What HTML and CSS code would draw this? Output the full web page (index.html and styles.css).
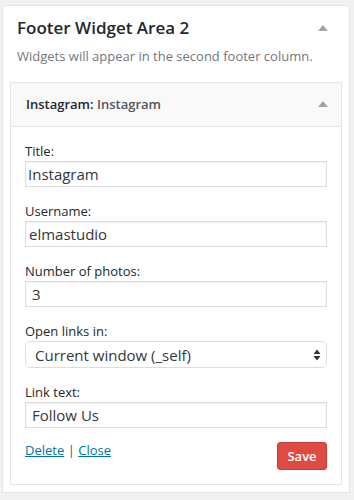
FILE: index.html
```html
<!DOCTYPE html>
<html lang="en">
<head>
  <meta charset="UTF-8" />
  <meta name="viewport" content="width=device-width, initial-scale=1.0"/>
  <title>Footer Widget Area 2</title>
  <link rel="stylesheet" href="styles.css">
</head>
<body>
  <div class="sidebar">
    <div class="sidebar-head">
      <h2 class="sidebar-title">Footer Widget Area 2</h2>
      <span class="arrow"></span>
    </div>
    <p class="sidebar-desc">Widgets will appear in the second footer column.</p>

    <div class="widget">
      <div class="widget-head">
        <h3 class="widget-title">Instagram:<span class="in-title"> Instagram</span></h3>
        <span class="arrow"></span>
      </div>

      <form class="widget-form">
        <label class="field">
          <span class="field-label">Title:</span>
          <input type="text" class="text-input pad-title" value="Instagram">
        </label>
        <label class="field">
          <span class="field-label">Username:</span>
          <input type="text" class="text-input pad-user" value="elmastudio">
        </label>
        <label class="field">
          <span class="field-label">Number of photos:</span>
          <input type="text" class="text-input" value="3">
        </label>
        <label class="field">
          <span class="field-label">Open links in:</span>
          <span class="select-wrap">
            <select class="select-input">
              <option>Current window (_self)</option>
              <option>New window (_blank)</option>
            </select>
            <svg class="select-arrows" width="8" height="12" viewBox="0 0 8 12">
              <path d="M4 0.5 L7.5 5 H0.5 Z M4 11.5 L7.5 7 H0.5 Z" fill="#333"/>
            </svg>
          </span>
        </label>
        <label class="field">
          <span class="field-label">Link text:</span>
          <input type="text" class="text-input" value="Follow Us">
        </label>

        <div class="widget-foot">
          <div class="widget-links">
            <a href="#">Delete</a> <span class="sep">|</span> <a href="#">Close</a>
          </div>
          <button type="button" class="save-btn">Save</button>
        </div>
      </form>
    </div>
  </div>
</body>
</html>
```

FILE: styles.css
```css
* { margin: 0; padding: 0; box-sizing: border-box; }
body {
  font-family: 'Open Sans', 'Noto Sans', sans-serif;
  background: #f1f1f1;
  color: #23282d;
  padding: 5px 4px 0 2px;
}

.sidebar {
  background: #fff;
  border: 1px solid #e5e5e5;
  padding: 10px 7px 7px 7px;
}
.sidebar-head {
  display: flex;
  justify-content: space-between;
  align-items: center;
  padding: 0 14px 0 7px;
}
.sidebar-title {
  font-size: 17px;
  font-weight: 600;
  line-height: 24px;
}
.sidebar-desc {
  font-size: 13px;
  line-height: 20px;
  color: #72777c;
  padding: 6px 0 0 7px;
  margin-bottom: 16px;
}

.arrow {
  width: 0;
  height: 0;
  border-left: 5px solid transparent;
  border-right: 5px solid transparent;
  border-bottom: 6px solid #a0a5aa;
}

.widget {
  border: 1px solid #e5e5e5;
}
.widget-head {
  background: #f9f9f9;
  border-bottom: 1px solid #e5e5e5;
  display: flex;
  justify-content: space-between;
  align-items: center;
  padding: 10px 13px 12px 15px;
  height: 44px;
}
.widget-title {
  font-size: 13px;
  font-weight: 600;
  line-height: 20px;
}
.in-title { color: #50575e; }

.widget-form {
  padding: 14px 14px 14px 14px;
}
.field {
  display: block;
  margin-bottom: 14px;
}
.field-label {
  display: block;
  font-size: 13px;
  line-height: 20px;
  color: #23282d;
}
.text-input {
  display: block;
  width: 100%;
  height: 26px;
  border: 1px solid #ddd;
  box-shadow: inset 0 1px 2px rgba(0, 0, 0, 0.07);
  font-family: inherit;
  font-size: 15px;
  color: #32373c;
  padding: 0 6px;
  outline: none;
}
.pad-title { padding-left: 2px; }
.pad-user { padding-left: 3px; }

.select-wrap {
  display: block;
  position: relative;
}
.select-input {
  display: block;
  width: 100%;
  height: 27px;
  border: 1px solid #ddd;
  border-radius: 5px;
  background: #fff;
  appearance: none;
  -webkit-appearance: none;
  font-family: inherit;
  font-size: 15px;
  color: #32373c;
  padding: 0 24px 0 9px;
  outline: none;
}
.select-arrows {
  position: absolute;
  right: 6px;
  top: 8px;
  pointer-events: none;
}

.widget-foot {
  display: flex;
  justify-content: space-between;
  align-items: flex-start;
  margin-top: 14px;
}
.widget-links {
  font-size: 13px;
  line-height: 16px;
  color: #555;
}
.widget-links a {
  color: #0073aa;
}
.sep { color: #555; }
.save-btn {
  width: 50px;
  height: 28px;
  background: #dd4b43;
  border: 1px solid #c9403a;
  border-radius: 3px;
  color: #fff;
  font-family: inherit;
  font-size: 13px;
  font-weight: 600;
  cursor: pointer;
}
```
